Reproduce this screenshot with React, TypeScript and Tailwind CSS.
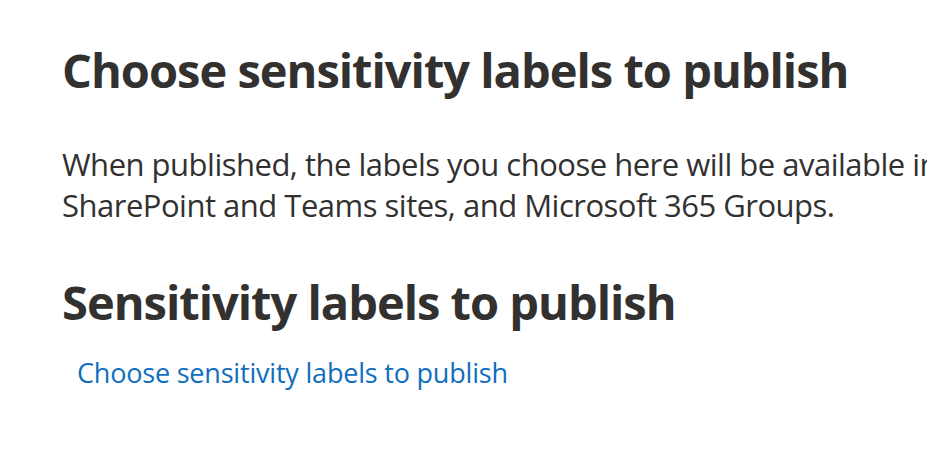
export default function App() {
  return (
    <div
      className="w-[927px] h-[466px] overflow-hidden bg-white text-[#323130]"
      style={{ fontFamily: '"Open Sans", sans-serif' }}
    >
      <div className="pl-[62px] pt-[44px] whitespace-nowrap">
        <h1 className="text-[47px] leading-[52px] font-bold tracking-[-1px]">Choose sensitivity labels to publish</h1>
        <p className="mt-[48px] text-[31px] leading-[41px] tracking-[-0.5px]">
          When published, the labels you choose here will be available in apps for users in your organization, and for
          <br />
          SharePoint and Teams sites, and Microsoft 365 Groups.
        </p>
        <h2 className="mt-[50px] text-[47px] leading-[52px] font-bold tracking-[-1px]">Sensitivity labels to publish</h2>
        <button className="mt-[27px] ml-[15px] text-[27px] leading-[36px] tracking-[-0.2px] text-[#106ebe] bg-transparent">
          Choose sensitivity labels to publish
        </button>
      </div>
    </div>
  );
}
